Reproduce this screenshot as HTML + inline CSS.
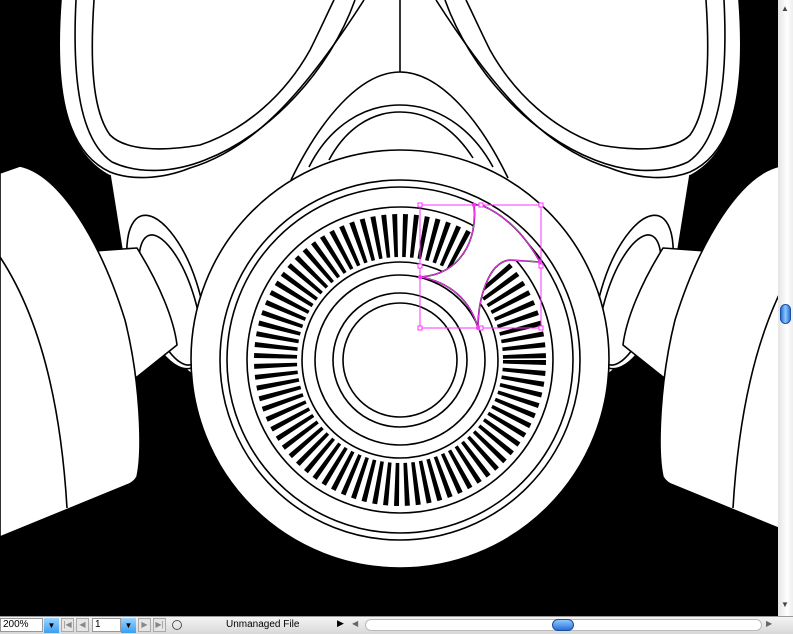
<!DOCTYPE html>
<html><head><meta charset="utf-8"><style>
html,body{margin:0;padding:0;width:793px;height:633px;overflow:hidden;background:#000;font-family:"Liberation Sans",sans-serif}
#c{position:absolute;left:0;top:0}
#bar{position:absolute;left:0;top:616px;width:793px;height:17px;background:linear-gradient(#f4f4f4,#d8d8d8);border-top:1px solid #999;font-size:10px}
.f{position:absolute;top:1px;height:14px;background:#fff;border:1px solid #999;box-sizing:border-box;font-size:10px;line-height:12px;padding-left:2px}
.dd{position:absolute;top:1px;width:15px;height:15px;background:linear-gradient(#9cd4ff,#3a9ef0);font-size:8px;text-align:center;line-height:15px;color:#000}
.nb{position:absolute;top:1px;width:13px;height:14px;border:1px solid #aaa;box-sizing:border-box;background:#e6e6e6;color:#888;font-size:8px;text-align:center;line-height:12px}
#vs{position:absolute;left:778px;top:0;width:15px;height:616px;background:linear-gradient(90deg,#e4e4e4,#fff 60%,#eee)}
</style></head><body>
<svg id="c" width="793" height="633" viewBox="0 0 793 633">
<rect width="793" height="633" fill="#000"/>
<g stroke="#000" stroke-width="1.6" fill="#fff" stroke-linejoin="round">
<path d="M61,0 C55,80 62,150 110,175 L122,250 L140,330 L200,380 L600,380 L660,330 L678,250 L690,175 C738,150 745,80 739,0 Z" stroke="none"/>
<path d="M110,175 L122,250" fill="none"/>
<path d="M690,175 L678,250" fill="none"/>
<g fill="none">
<path d="M61,0 C55,80 62,150 110,172 C130,180 160,180 190,168 C250,150 300,100 364,0"/>
<path d="M76,0 C72,80 80,140 112,162 C140,175 175,172 205,160 C270,135 330,70 355,0"/>
<path d="M94,0 C90,60 92,110 110,135 C125,150 160,152 200,145 C245,130 285,95 310,50 C320,30 328,12 334,0"/>
</g>
<g transform="translate(800,0) scale(-1,1)" fill="none">
<path d="M61,0 C55,80 62,150 110,172 C130,180 160,180 190,168 C250,150 300,100 364,0"/>
<path d="M76,0 C72,80 80,140 112,162 C140,175 175,172 205,160 C270,135 330,70 355,0"/>
<path d="M94,0 C90,60 92,110 110,135 C125,150 160,152 200,145 C245,130 285,95 310,50 C320,30 328,12 334,0"/>
</g>
<path d="M400,0 L400,72" fill="none"/>
<path d="M291,180 C320,120 360,72 400,72 C440,72 480,120 508,178" fill="none"/>
<path d="M309,167 C330,125 365,105 400,105 C435,105 470,125 493,167" fill="none"/>
<path d="M329,160 C345,130 370,112 400,112 C430,112 455,130 473,158" fill="none"/>
<g>
<ellipse cx="166" cy="292" rx="32" ry="80" transform="rotate(-18 166 292)"/>
<ellipse cx="170" cy="300" rx="24" ry="68" transform="rotate(-18 170 300)"/>
<path d="M80,252 L137,248 C160,285 174,320 177,345 L137,377 L100,377 Z"/>
<path d="M0,173 L20,166 C60,175 100,240 125,320 C140,380 143,450 137,477 C134,482 130,484 127,485 L0,537 Z"/>
<path d="M0,257 C35,310 60,390 67,508" fill="none"/>
</g>
<g transform="translate(800,0) scale(-1,1)">
<ellipse cx="166" cy="292" rx="32" ry="80" transform="rotate(-18 166 292)"/>
<ellipse cx="170" cy="300" rx="24" ry="68" transform="rotate(-18 170 300)"/>
<path d="M80,252 L137,248 C160,285 174,320 177,345 L137,377 L100,377 Z"/>
<path d="M0,173 L20,166 C60,175 100,240 125,320 C140,380 143,450 137,477 C134,482 130,484 127,485 L0,537 Z"/>
<path d="M0,257 C35,310 60,390 67,508" fill="none"/>
</g>
<circle cx="400" cy="359" r="209"/>
<circle cx="400" cy="360" r="180"/>
<circle cx="400" cy="360" r="173"/>
<circle cx="400" cy="360" r="153"/>
<circle cx="400" cy="360" r="124.5" fill="none" stroke="#000" stroke-width="43" stroke-dasharray="4.3 5.05"/>
<circle cx="400" cy="360" r="98"/>
<circle cx="400" cy="360" r="85"/>
<circle cx="400" cy="360" r="67"/>
<circle cx="400" cy="360" r="57"/>
<path d="M474,205 C478,240 460,275 420,277 C450,282 470,300 478,328 C478,300 488,262 510,260 L540,262 C525,235 505,215 481,205 Z" stroke-width="1.6"/>
</g>
<g stroke="#ff33ff" stroke-width="1" fill="none">
<path d="M474,205 C478,240 460,275 420,277 C450,282 470,300 478,328 C478,300 488,262 510,260 L540,262 C525,235 505,215 481,205"/>
<rect x="420" y="205" width="121" height="123"/>
<g fill="#fff">
<rect x="418" y="203" width="4" height="4"/><rect x="479" y="203" width="4" height="4"/><rect x="539" y="203" width="4" height="4"/>
<rect x="418" y="264" width="4" height="4"/><rect x="539" y="264" width="4" height="4"/>
<rect x="418" y="326" width="4" height="4"/><rect x="479" y="326" width="4" height="4"/><rect x="539" y="326" width="4" height="4"/>
</g>
<g fill="#ff33ff" stroke="none"><circle cx="474" cy="205" r="2"/><circle cx="420" cy="277" r="2"/><circle cx="478" cy="328" r="2"/><circle cx="540" cy="262" r="2"/></g>
</g>
</svg>
<div id="vs">
<div style="position:absolute;left:3px;top:4px;font-size:8px;color:#444">▲</div>
<div style="position:absolute;left:2px;top:304px;width:11px;height:20px;border-radius:6px;background:linear-gradient(90deg,#2d6fd8,#8cc8ff,#2d6fd8);border:1px solid #1a4fa0;box-sizing:border-box"></div>
<div style="position:absolute;left:3px;top:600px;font-size:8px;color:#444">▼</div>
</div>
<div id="bar">
<div class="f" style="left:0;width:43px">200%</div>
<div class="dd" style="left:44px">▼</div>
<div class="nb" style="left:61px">|◀</div><div class="nb" style="left:76px">◀</div>
<div class="f" style="left:92px;width:29px">1</div>
<div class="dd" style="left:121px">▼</div>
<div class="nb" style="left:138px">▶</div><div class="nb" style="left:153px">▶|</div>
<div style="position:absolute;left:172px;top:3px;width:10px;height:10px;border-radius:50%;border:1px solid #555;box-sizing:border-box"></div>
<div style="position:absolute;left:226px;top:2px;font-size:10px;color:#000">Unmanaged File</div>
<div style="position:absolute;left:337px;top:1px;font-size:9px;color:#000">▶</div>
<div style="position:absolute;left:352px;top:2px;font-size:8px;color:#666">◀</div>
<div style="position:absolute;left:365px;top:2px;width:397px;height:12px;border-radius:6px;background:#fff;border:1px solid #bbb;box-sizing:border-box"></div>
<div style="position:absolute;left:552px;top:2px;width:22px;height:12px;border-radius:6px;background:linear-gradient(#8cc8ff,#2d6fd8);border:1px solid #1a4fa0;box-sizing:border-box"></div>
<div style="position:absolute;left:766px;top:2px;font-size:8px;color:#666">▶</div>
</div>
</body></html>
